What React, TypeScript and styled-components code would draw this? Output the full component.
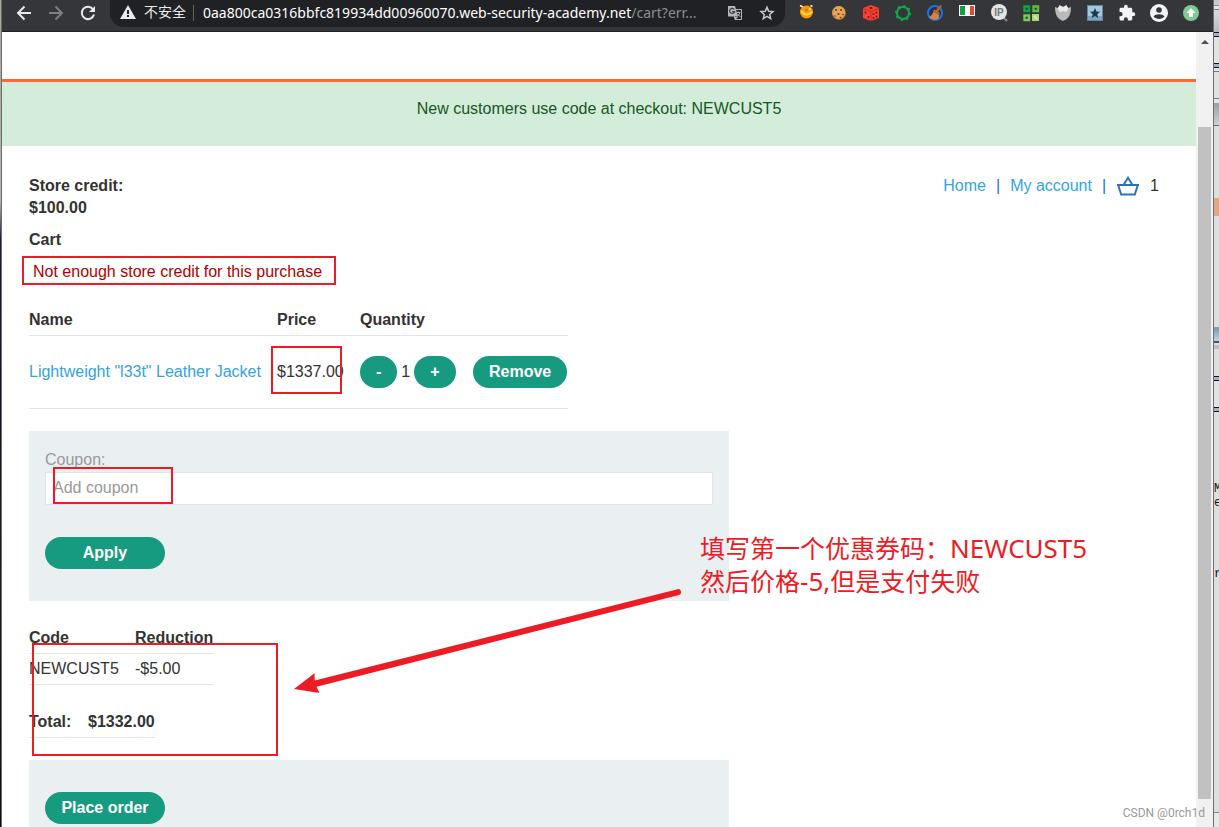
import React from 'react';
import styled, { createGlobalStyle } from 'styled-components';

const GlobalStyle = createGlobalStyle`
  * { box-sizing: border-box; }
  body {
    margin: 0;
    background: #fff;
    color: #333332;
    font: 16px/22px "Liberation Sans", Arial, sans-serif;
  }
`;

/* ---------- desktop and browser window ---------- */

const Desktop = styled.div`
  position: relative;
  display: flex;
  height: 100vh;
  overflow: hidden;
`;

const LeftEdge = styled.div`
  width: 2px;
  flex: none;
  border-right: 1px solid #6b6b6b;
  background: linear-gradient(#a8a698 0, #b5b5b0 200px, #1a1c35 240px, #15162b 420px, #1d2018 560px, #0c0c0c 100%);
`;

const RightEdge = styled.div`
  width: 6px;
  flex: none;
  overflow: hidden;
  border-left: 1px solid #6d6f72;
  padding-top: 482px;
  color: #111;
  font: 12px/14px "Liberation Mono", monospace;
  background: linear-gradient(
    #c9c9cf 0 5px, #8b8b8f 5px 6px, #e6e6e6 6px 9px, #77777c 9px 10px, #dcdce0 10px, #b9b9c0 32px,
    #10131c 32px 33px, #9fb2c8 33px 36px, #10131c 36px 37px, #e2e2e2 37px 63px,
    #10131c 63px 64px, #9fb2c8 64px 67px, #10131c 67px 68px, #e2e2e2 68px 71px, #77777c 71px 72px,
    #e0e0e0 72px 98px, #77777c 98px 99px, #e6e6e6 99px 103px, #9c9ea3 103px, #cfd0d4 125px,
    #66686c 125px 126px, #dedede 126px 198px, #e0a983 198px 216px, #dedede 216px 327px,
    #9a9a9a 327px 328px, #7e9cb0 329px, #c5d5df 341px, #45545c 341px 343px, #dedede 343px 345px,
    #bdbdc2 345px 349px, #dedede 349px 376px, #10131c 376px 377px, #9fb2c8 377px 380px,
    #10131c 380px 381px, #e2e2e2 381px 407px, #10131c 407px 408px, #9fb2c8 408px 411px,
    #10131c 411px 412px, #dedede 412px 812px, #8a8a8a 812px 813px, #e8e8e8 813px 100%
  );
`;

const EdgeLine = styled.div<{ $gap?: boolean }>`
  padding-bottom: ${(p) => (p.$gap ? '57px' : '0')};
`;

const Window = styled.div`
  flex: 1;
  min-width: 0;
  display: flex;
  flex-direction: column;
`;

const Toolbar = styled.div`
  flex: none;
  display: flex;
  align-items: flex-start;
  height: 32px;
  padding: 0 6px;
  background: #35363a;
  border-bottom: 1px solid #1f2023;
`;

const ToolButton = styled.button`
  flex: none;
  display: flex;
  align-items: center;
  justify-content: center;
  width: 32px;
  height: 26px;
  padding: 0;
  border: 0;
  background: none;
`;

const Omnibox = styled.div`
  flex: 1;
  min-width: 0;
  display: flex;
  align-items: flex-start;
  height: 27px;
  margin: 0 6px;
  padding: 0 2px 0 10px;
  border-radius: 0 0 14px 14px;
  background: #202124;
  font: 14px/24px "Noto Sans", "Noto Sans CJK SC", sans-serif;
  color: #fff;
`;

const Insecure = styled.span`
  display: flex;
  align-items: center;
  gap: 8px;
  flex: none;
  padding-right: 7px;
  color: #e8eaed;
`;

const Url = styled.div`
  flex: 1;
  min-width: 0;
  height: 16px;
  margin-top: 5px;
  line-height: 15px;
  padding-left: 9px;
  border-left: 1px solid #5f6368;
  white-space: nowrap;

  span { color: #8b8e92; }
`;

const View = styled.div`
  flex: 1;
  min-height: 0;
  display: flex;
`;

const Page = styled.div`
  flex: 1;
  min-width: 0;
  overflow: hidden;
  background: #fff;
`;

const ScrollTrack = styled.div`
  flex: none;
  display: flex;
  flex-direction: column;
  align-items: center;
  width: 17px;
  padding-bottom: 28px;
  background: #f1f1f1;
`;

const ScrollArrow = styled.div`
  height: 95px;
  padding-top: 7px;
  line-height: 0;
`;

const ScrollThumb = styled.div`
  flex: 1;
  width: 13px;
  background: #c1c1c1;
`;

/* ---------- shop page ---------- */

const LabHeader = styled.div`
  height: 50px;
  border-bottom: 3px solid #ff6633;
`;

const Banner = styled.p`
  margin: 0;
  padding: 16px 16px 26px;
  background: #d4edda;
  color: #155724;
  text-align: center;
`;

const Container = styled.main`
  padding: 29px 27px 0;
`;

const TopRow = styled.header`
  display: flex;
  justify-content: space-between;
  align-items: flex-start;
  margin-bottom: 10px;
`;

const Nav = styled.nav`
  display: flex;
  align-items: center;
  gap: 10px;
  height: 22px;
  padding-right: 10px;
  color: #2d72b8;
`;

const Link = styled.a`
  color: #33a4de;
  text-decoration: none;
`;

const BasketLink = styled.a`
  display: flex;
  gap: 10px;
  align-items: center;
  color: #333332;
  text-decoration: none;
`;

const Strong = styled.div`
  font-weight: 700;
`;

const Heading = styled.h1`
  margin: 0 0 10px;
  font-size: 16px;
  line-height: 22px;
`;

const Warning = styled.p`
  margin: 0 0 20px;
  padding-left: 4px;
  color: #b10000;
`;

const Table = styled.table<{ $width: number; $gap: number }>`
  width: ${(p) => p.$width}px;
  margin-bottom: ${(p) => p.$gap}px;
  table-layout: fixed;
  border-collapse: separate;
  border-spacing: 0;
  text-align: left;
  white-space: nowrap;
`;

const Th = styled.th`
  height: 33px;
  padding: 2px 0 0;
  border-bottom: 1px solid #e4e4e4;
`;

const Td = styled.td<{ $tall?: boolean }>`
  height: ${(p) => (p.$tall ? 73 : 31)}px;
  padding: 0;
  border-bottom: 1px solid #e4e4e4;
`;

const Quantity = styled.div`
  display: flex;
  align-items: center;
  gap: 4px;
`;

const Button = styled.button<{ $wide?: boolean }>`
  display: block;
  height: 32px;
  min-width: ${(p) => (p.$wide ? '120px' : '0')};
  padding: 0 16px;
  border: 0;
  border-radius: 16px;
  background: #179b80;
  color: #fff;
  font: 700 16px/32px "Liberation Sans", Arial, sans-serif;
`;

const Panel = styled.form<{ $coupon?: boolean }>`
  max-width: 700px;
  padding: ${(p) => (p.$coupon ? '18px' : '32px')} 16px 32px;
  margin-bottom: 20px;
  background: #eaeff2;
`;

const Label = styled.label`
  display: block;
  margin-bottom: 1px;
  color: #999;
`;

const Input = styled.input`
  display: block;
  width: 100%;
  height: 33px;
  margin-bottom: 32px;
  padding: 0 7px 2px;
  border: 1px solid #e4e4e4;
  border-radius: 0;
  background: #fff;
  font: 16px/22px "Liberation Sans", Arial, sans-serif;

  &::placeholder { color: #999; opacity: 1; }
`;

/* ---------- markup drawn over the page ---------- */

const Marker = styled.div<{ $x: number; $y: number; $w: number; $h: number }>`
  position: absolute;
  left: ${(p) => p.$x}px;
  top: ${(p) => p.$y}px;
  width: ${(p) => p.$w}px;
  height: ${(p) => p.$h}px;
  border: 2px solid #ed1c24;
  pointer-events: none;
`;

const Arrow = styled.svg`
  position: absolute;
  left: 290px;
  top: 580px;
  pointer-events: none;
`;

const Note = styled.p`
  position: absolute;
  left: 700px;
  top: 532px;
  margin: 0;
  color: #ed1c24;
  font: 25px/33px "Noto Sans", "Noto Sans CJK SC", sans-serif;
  white-space: nowrap;

  span { font-size: 26px; }
`;

const Watermark = styled.div`
  position: absolute;
  right: 14px;
  bottom: 6px;
  color: #999;
  font: 12px/16px Roboto, sans-serif;
`;

/* ---------- extension icons, 18x18 ---------- */

const extensions: { name: string; art: React.ReactNode }[] = [
  {
    name: 'Orange ball',
    art: (
      <>
        <circle cx="8.5" cy="8" r="6.5" fill="#ff9800" />
        <path d="M3.5 6.5c1 4.500 7.500 5.500 10.500 1" fill="none" stroke="#ffd54f" strokeWidth="2" />
        <path d="M2 1.500l3 1.500M12.500 1.500l2 1" stroke="#fff3c0" strokeWidth="1.5" />
        <circle cx="8.5" cy="6" r="1.2" fill="#d66a00" />
        <circle cx="12" cy="5" r="1" fill="#fff3c0" />
      </>
    ),
  },
  {
    name: 'Cookie',
    art: (
      <>
        <circle cx="9" cy="9" r="7" fill="#a86b2c" />
        <circle cx="8.7" cy="8.5" r="6.5" fill="#e0a458" />
        <g fill="#6d3c14">
          <circle cx="6" cy="6" r="1" />
          <circle cx="11" cy="6" r="1" />
          <circle cx="8.5" cy="10" r="1" />
          <circle cx="13" cy="10.5" r=".8" />
          <circle cx="5" cy="12" r=".8" />
          <circle cx="10.5" cy="13.5" r=".8" />
        </g>
      </>
    ),
  },
  {
    name: 'Dice',
    art: (
      <>
        <path d="M9 1l8 3v10l-8 3-8-3V4z" fill="#f44336" />
        <path d="M1 4.500l8 3 8-3M9 7.500V17" stroke="#c62a1f" fill="none" />
        <g fill="#7e120b">
          <ellipse cx="9" cy="4" rx="1.6" ry=".9" />
          <circle cx="3.5" cy="8.5" r="1" />
          <circle cx="6.5" cy="13" r="1" />
          <circle cx="11.5" cy="10" r="1" />
          <circle cx="14.5" cy="8.5" r="1" />
          <circle cx="11.5" cy="14" r="1" />
          <circle cx="14.5" cy="12.5" r="1" />
        </g>
      </>
    ),
  },
  {
    name: 'Green gear',
    art: (
      <>
        <circle cx="9" cy="9" r="6" fill="none" stroke="#12a84f" strokeWidth="2" />
        <circle cx="9" cy="9" r="7.2" fill="none" stroke="#12a84f" strokeWidth="1.8" strokeDasharray="2.2 3.455" />
      </>
    ),
  },
  {
    name: 'Cleaner',
    art: (
      <>
        <circle cx="9" cy="9" r="7" fill="#2b3038" stroke="#1a73e8" strokeWidth="2" />
        <path d="M14.500 1l1.500 1-4 6-2.500-1.500z" fill="#b5652f" />
        <path d="M8 5.500l5.500 3.500-1 6c-3 1.500-7.500.5-9.500-2 3-1.500 4-3.500 5-7.500z" fill="#d98245" />
        <path d="M7.500 7l5.500 3.500" stroke="#8a4620" />
      </>
    ),
  },
  {
    name: 'Flag',
    art: (
      <>
        <path d="M1 1h16v11H1z" fill="#fff" />
        <path d="M2 2h5v9H2z" fill="#169b48" />
        <path d="M12 2h4v9h-4z" fill="#e34a35" />
      </>
    ),
  },
  {
    name: 'IP lookup',
    art: (
      <>
        <path d="M13 13l4 4" stroke="#8c8c8c" strokeWidth="2" />
        <circle cx="9" cy="8" r="8" fill="#e4e4e4" />
        <text x="9" y="12" textAnchor="middle" fontSize="10" fontWeight="700" fontFamily="Liberation Sans" fill="#777">IP</text>
      </>
    ),
  },
  {
    name: 'Tiles',
    art: (
      <>
        <path d="M2.500 2.500h4.500v4.500h-4.500z" fill="none" stroke="#0fa83c" strokeWidth="2.4" />
        <path d="M11.500 2.500h4.500v4.500h-4.500z" fill="none" stroke="#5bc03a" strokeWidth="2.4" />
        <path d="M2.500 11.500h4.500v4.500h-4.500z" fill="none" stroke="#7cc95a" strokeWidth="2.4" />
        <path d="M10 10h7v7h-7z" fill="#a9d977" />
        <path d="M12 12l3 3" stroke="#d5efb5" strokeWidth="2" />
      </>
    ),
  },
  {
    name: 'Shield mask',
    art: (
      <>
        <path d="M1 3l3 1 2-2 3 1 3-1 2 2 3-1c0 7-2 12-8 14C3 15 1 10 1 3z" fill="#b9b9b9" />
        <path d="M3.500 5l2-4 3.500 2 3.500-2 2 4-2.500 3-3-1-3 1z" fill="#e9e9e9" />
      </>
    ),
  },
  {
    name: 'Bookmark',
    art: (
      <>
        <path d="M1 1h16v16H1z" fill="#5f87a3" />
        <path d="M2 2h14v14H2z" fill="#a5c6dc" />
        <path d="M2 12h14v4H2z" fill="#7ea6c0" />
        <path d="M9 4l1.500 3.500 3.500.3-2.700 2.400.9 3.800L9 12l-3.200 2 .9-3.800L4 7.800l3.500-.3z" fill="#173b57" />
      </>
    ),
  },
  {
    name: 'Extensions',
    art: (
      <path
        transform="scale(.75)"
        d="M20.500 11H19V7c0-1.100-.9-2-2-2h-4V3.500a2.500 2.500 0 0 0-5 0V5H4c-1.100 0-2 .9-2 2v3.800h1.500a2.700 2.700 0 0 1 0 5.400H2V20c0 1.100.9 2 2 2h3.800v-1.500a2.700 2.700 0 0 1 5.400 0V22H17c1.100 0 2-.9 2-2v-4h1.500a2.500 2.500 0 0 0 0-5z"
        fill="#f1f3f4"
      />
    ),
  },
  {
    name: 'Profile',
    art: (
      <>
        <circle cx="9" cy="9" r="9" fill="#f1f3f4" />
        <circle cx="9" cy="6" r="2.8" fill="#35363a" />
        <path d="M3.500 12.500c2-3 9-3 11 0-2.500 3.300-8.500 3.300-11 0z" fill="#35363a" />
      </>
    ),
  },
  {
    name: 'Update',
    art: (
      <>
        <circle cx="9" cy="9" r="8" fill="#81c995" />
        <path d="M9 4l4.500 5H11v4H7V9H4.500z" fill="#fff" />
      </>
    ),
  },
];

const stroke = { fill: 'none', strokeWidth: 2 } as const;

export default function App() {
  return (
    <Desktop>
      <GlobalStyle />
      <LeftEdge />
      <Window>
        <Toolbar>
          <ToolButton aria-label="Back">
            <svg width="16" height="16" viewBox="0 0 16 16" {...stroke} stroke="#e8eaed">
              <path d="M15 8H2M8.500 1.500L2 8l6.500 6.500" />
            </svg>
          </ToolButton>
          <ToolButton aria-label="Forward">
            <svg width="16" height="16" viewBox="0 0 16 16" {...stroke} stroke="#7d7f83">
              <path d="M1 8h13M7.500 1.500L14 8l-6.500 6.500" />
            </svg>
          </ToolButton>
          <ToolButton aria-label="Reload">
            <svg width="16" height="16" viewBox="0 0 16 16" {...stroke} stroke="#e8eaed">
              <path d="M13.200 4.500A6.200 6.200 0 1 0 14 9.500" />
              <path d="M15 1v6H9z" fill="#e8eaed" stroke="none" />
            </svg>
          </ToolButton>
          <Omnibox>
            <Insecure>
              <svg width="16" height="14" viewBox="0 0 16 14">
                <path d="M8 0l8 14H0z" fill="#e8eaed" />
                <path d="M7 5h2v4H7zM7 10h2v2H7z" fill="#202124" />
              </svg>
              不安全
            </Insecure>
            <Url>
              0aa800ca0316bbfc819934dd00960070.web-security-academy.net<span>/cart?err...</span>
            </Url>
            <ToolButton aria-label="Translate">
              <svg width="16" height="16" viewBox="0 0 16 16">
                <path d="M6 4.500h8.500v10H8z" fill="none" stroke="#b4b6b9" />
                <path d="M1 1h7l3 10.500H1z" fill="#b4b6b9" />
                <path d="M7.200 4.500a2.500 2.500 0 1 0 .3 2.200H5.300" fill="none" stroke="#3a3b3e" strokeWidth="1.2" />
                <path d="M9.500 7.500h4M11.500 6.500v1M12.800 7.500c-.3 2-1.500 3-2.500 4M10.500 9l3 3" fill="none" stroke="#b4b6b9" />
                <path d="M8 12h3l-3 3z" fill="#b4b6b9" />
              </svg>
            </ToolButton>
            <ToolButton aria-label="Bookmark this page">
              <svg width="16" height="16" viewBox="0 0 16 16">
                <path
                  d="M8 2.200l1.700 4 4.300.4-3.300 2.800 1 4.200L8 11.400l-3.700 2.200 1-4.200L2 6.600l4.300-.4z"
                  fill="none"
                  stroke="#c4c7c9"
                  strokeWidth="1.5"
                />
              </svg>
            </ToolButton>
          </Omnibox>
          {extensions.map((e) => (
            <ToolButton key={e.name} aria-label={e.name}>
              <svg width="18" height="18" viewBox="0 0 18 18">{e.art}</svg>
            </ToolButton>
          ))}
        </Toolbar>

        <View>
          <Page>
            <LabHeader />
            <Banner>New customers use code at checkout: NEWCUST5</Banner>
            <Container>
              <TopRow>
                <Strong>
                  Store credit:
                  <br />
                  $100.00
                </Strong>
                <Nav>
                  <Link href="#home">Home</Link>|<Link href="#account">My account</Link>|
                  <BasketLink href="#cart">
                    <svg width="24" height="22" viewBox="0 0 24 22" {...stroke} stroke="#2d72b8">
                      <path d="M1 10h22M2.200 10l3 9.500h13.600l3-9.500" />
                      <path d="M7.500 10L12 2.800l4.500 7.200" />
                    </svg>
                    1
                  </BasketLink>
                </Nav>
              </TopRow>
              <Heading>Cart</Heading>
              <Warning>Not enough store credit for this purchase</Warning>

              <Table $width={539} $gap={22}>
                <colgroup>
                  <col width="248" />
                  <col width="83" />
                  <col width="113" />
                  <col />
                </colgroup>
                <thead>
                  <tr>
                    <Th>Name</Th>
                    <Th>Price</Th>
                    <Th>Quantity</Th>
                    <Th />
                  </tr>
                </thead>
                <tbody>
                  <tr>
                    <Td $tall><Link href="#product">Lightweight "l33t" Leather Jacket</Link></Td>
                    <Td $tall>$1337.00</Td>
                    <Td $tall>
                      <Quantity>
                        <Button type="button">-</Button>
                        1
                        <Button type="button">+</Button>
                      </Quantity>
                    </Td>
                    <Td $tall><Button type="button">Remove</Button></Td>
                  </tr>
                </tbody>
              </Table>

              <Panel $coupon>
                <Label htmlFor="coupon">Coupon:</Label>
                <Input id="coupon" placeholder="Add coupon" />
                <Button type="button" $wide>Apply</Button>
              </Panel>

              <Table $width={185} $gap={20}>
                <colgroup>
                  <col width="106" />
                  <col />
                </colgroup>
                <thead>
                  <tr>
                    <Th>Code</Th>
                    <Th>Reduction</Th>
                  </tr>
                </thead>
                <tbody>
                  <tr>
                    <Td>NEWCUST5</Td>
                    <Td>-$5.00</Td>
                  </tr>
                </tbody>
              </Table>

              <Table $width={126} $gap={22}>
                <colgroup>
                  <col width="59" />
                  <col />
                </colgroup>
                <tbody>
                  <tr>
                    <Th scope="row">Total:</Th>
                    <Th as="td"><Strong>$1332.00</Strong></Th>
                  </tr>
                </tbody>
              </Table>

              <Panel>
                <Button type="button" $wide>Place order</Button>
              </Panel>
            </Container>
          </Page>
          <ScrollTrack>
            <ScrollArrow>
              <svg width="8" height="4" viewBox="0 0 8 4"><path d="M4 0l4 4H0z" fill="#505050" /></svg>
            </ScrollArrow>
            <ScrollThumb />
          </ScrollTrack>
        </View>
      </Window>
      <RightEdge>
        <EdgeLine>M</EdgeLine>
        <EdgeLine $gap>e</EdgeLine>
        <EdgeLine>r</EdgeLine>
      </RightEdge>

      <Marker $x={22} $y={256} $w={314} $h={29} />
      <Marker $x={271} $y={346} $w={71} $h={48} />
      <Marker $x={53} $y={467} $w={120} $h={37} />
      <Marker $x={32} $y={643} $w={246} $h={113} />
      <Arrow width="400" height="120" viewBox="290 580 400 120">
        <path
          d="M294 689L314.500 673.300L314.800 680.600L677.500 589.200A3 3 0 0 1 679 595L316.500 686.800L319.500 693Z"
          fill="#ed1c24"
        />
      </Arrow>
      <Note>
        填写第一个优惠券码：<span>NEWCUST5</span>
        <br />
        然后价格<span>-5,</span>但是支付失败
      </Note>
      <Watermark>CSDN @0rch1d</Watermark>
    </Desktop>
  );
}
